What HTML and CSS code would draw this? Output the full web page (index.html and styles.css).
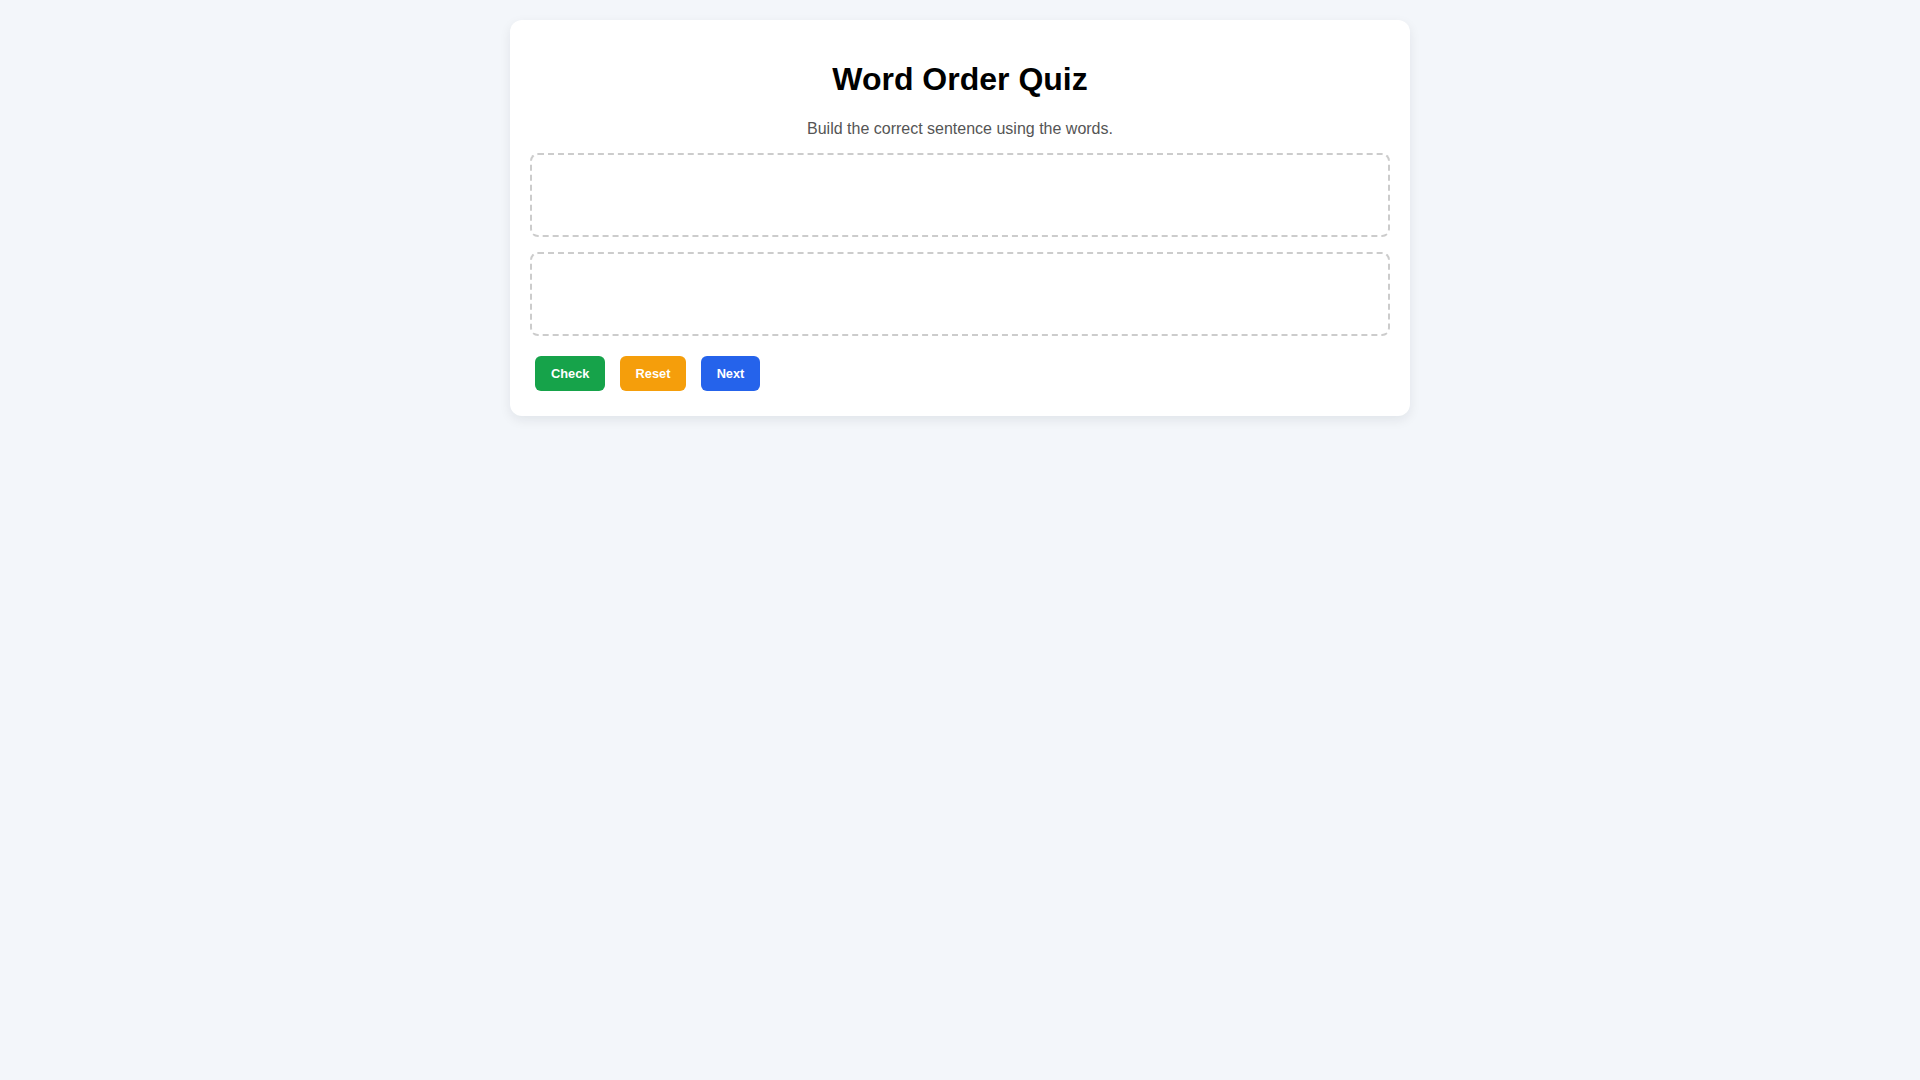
FILE: index.html
```html
<!DOCTYPE html>
<html lang="en">
<head>
<meta charset="utf-8">
<title>Word Order Quiz</title>
<link rel="stylesheet" href="styles.css">
</head>
<body>
  <main class="quiz">
    <h1 class="quiz-title">Word Order Quiz</h1>
    <p class="quiz-hint">Build the correct sentence using the words.</p>
    <div class="drop-zone answer-zone"></div>
    <div class="drop-zone word-bank"></div>
    <div class="controls">
      <button class="btn btn-check">Check</button>
      <button class="btn btn-reset">Reset</button>
      <button class="btn btn-next">Next</button>
    </div>
  </main>
</body>
</html>
```

FILE: styles.css
```css
html, body {
  margin: 0;
}

body {
  padding: 20px;
  background: #f3f6fa;
  font-family: "Liberation Sans", Arial, sans-serif;
  color: #000;
}

.quiz {
  max-width: 900px;
  margin: 0 auto;
  box-sizing: border-box;
  background: #fff;
  padding: 20px;
  border-radius: 12px;
  box-shadow: 0 4px 12px rgba(15, 23, 42, 0.08);
  text-align: center;
}

.quiz-title {
  font-size: 32px;
  font-weight: bold;
  margin: 21.44px 0;
}

.quiz-hint {
  font-size: 16px;
  color: #555;
  margin: 16px 0 15px;
}

.drop-zone {
  min-height: 60px;
  padding: 10px;
  margin: 15px 0;
  border: 2px dashed #ccc;
  border-radius: 8px;
}

.controls {
  text-align: left;
  font-size: 15px;
}

.btn {
  display: inline-block;
  margin: 5px;
  padding: 10px 16px;
  border: none;
  border-radius: 6px;
  color: #fff;
  font-family: "Liberation Sans", Arial, sans-serif;
  font-size: 12.8px;
  font-weight: bold;
  cursor: pointer;
}

.btn-check { background: #16a34a; }
.btn-reset { background: #f59e0b; }
.btn-next  { background: #2563eb; }
```
